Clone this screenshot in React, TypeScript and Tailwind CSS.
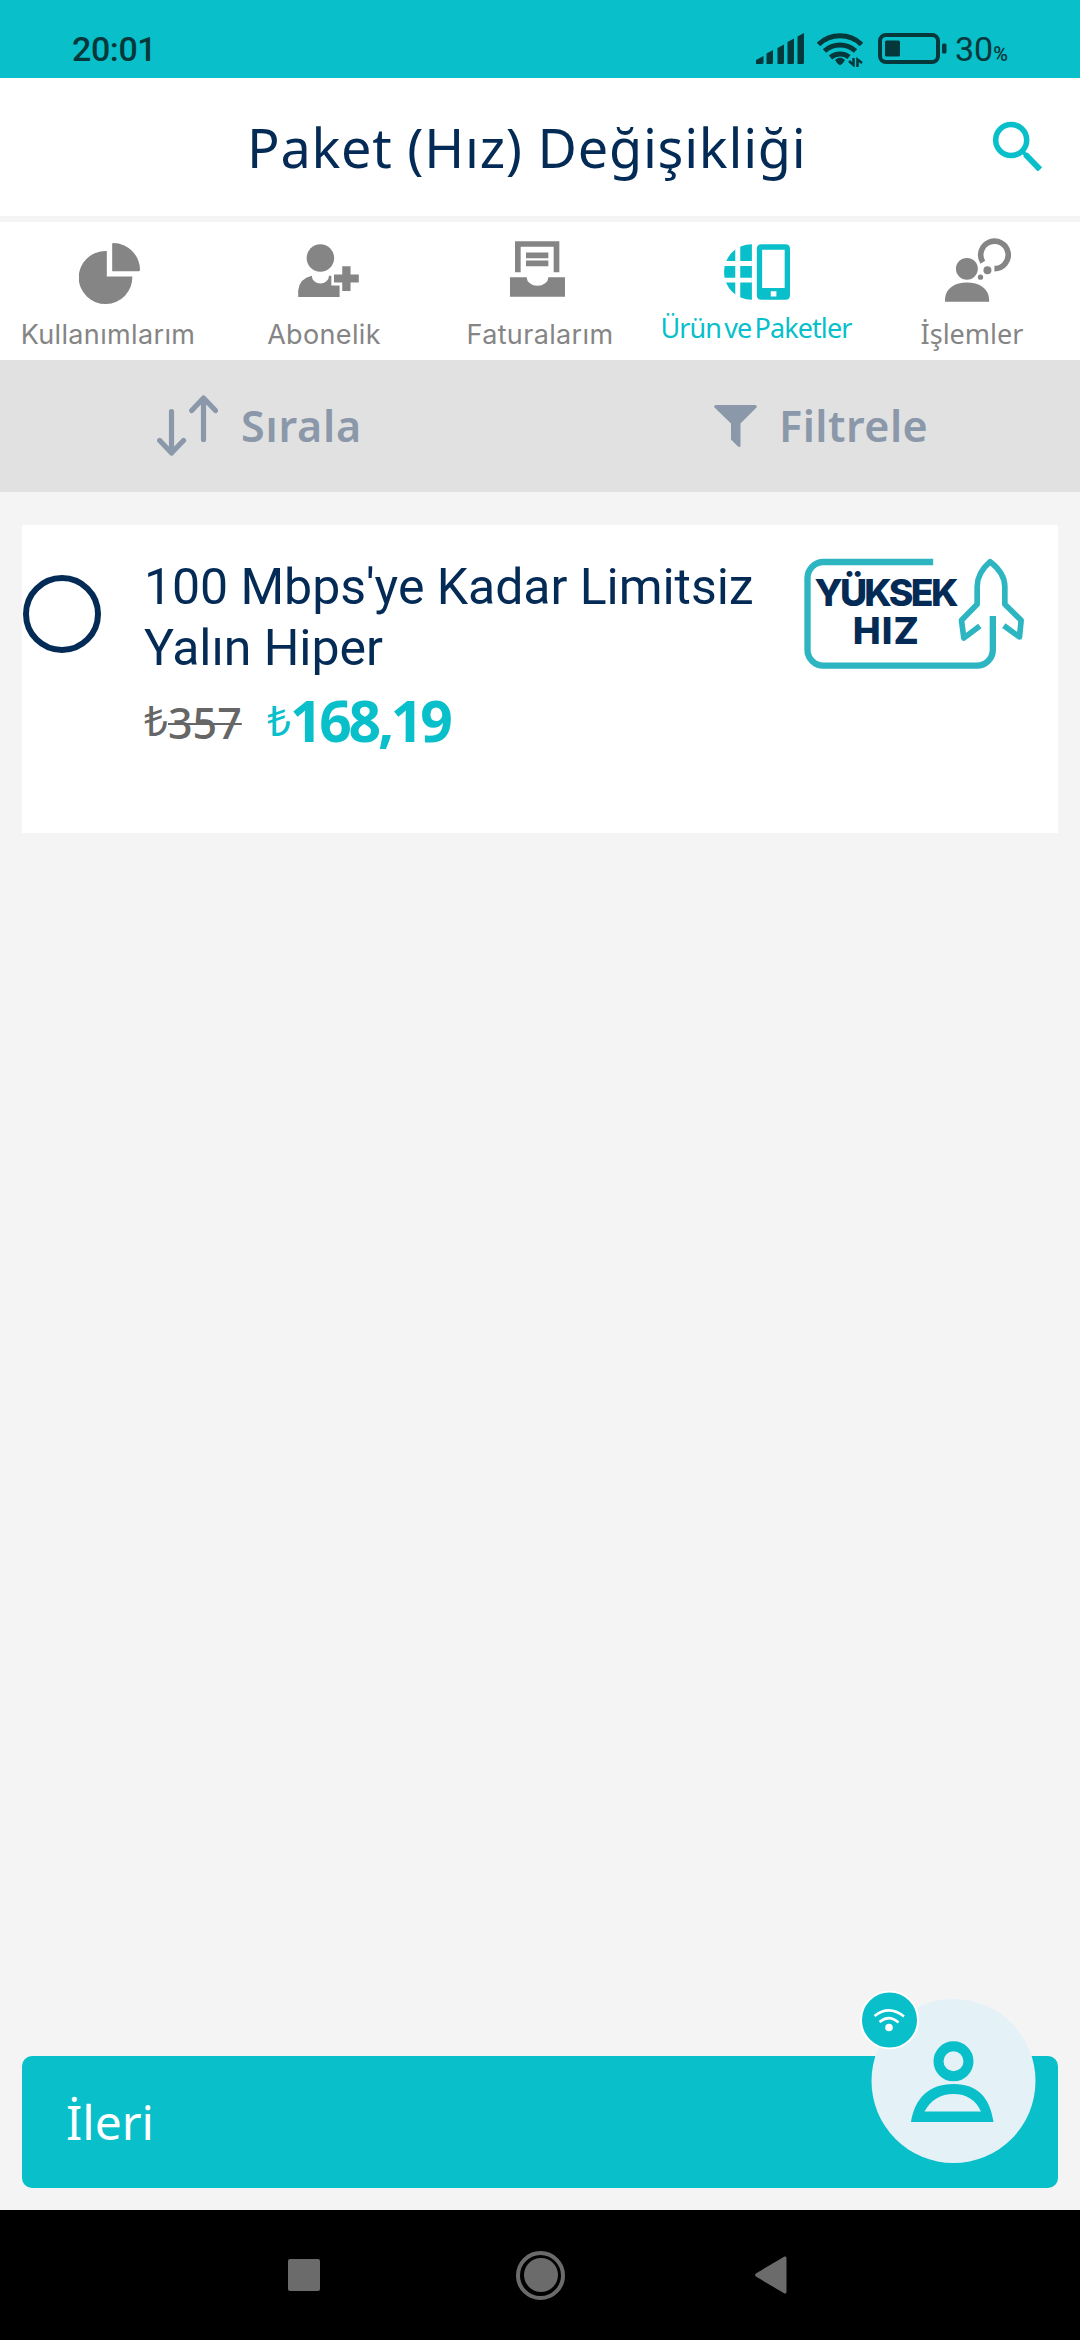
import type { ReactNode } from "react";
import clsx from "clsx";

const PieIcon = () => (
  <svg viewBox="0 0 182 182" className="ml-[79px] mt-[21px] h-[61px] w-[61px]" fill="currentColor">
    <path d="M83 24H80A80 79 0 1 0 159 100H83Z" />
    <path d="M103 0A80 81 0 0 1 182 80Q182 84 178 84H99V4Q99 0 103 0Z" />
  </svg>
);

const UserPlusIcon = () => (
  <svg viewBox="0 0 183 160" className="ml-[82px] mt-[22px] h-[53px] w-[61px]" fill="currentColor">
    <circle cx="67" cy="42" r="41.5" />
    <path d="M0 160V140Q4 104 41 96A26 23 0 0 0 93 96H100V125H125V160Z" />
    <path d="M133 67H158V92H183V116H158V142H133V116H108V92H133Z" />
  </svg>
);

const InboxIcon = () => (
  <svg viewBox="0 0 165 167" className="ml-[78px] mt-[19px] h-[56px] w-[55px]" fill="currentColor">
    <path d="M15 93V0H148V93H131V17H32V93Z" />
    <path d="M48 34H115V51H48ZM48 58H115V75H48Z" />
    <path d="M0 108H50A32.500 26 0 0 0 115 108H165V167H0Z" />
  </svg>
);

const GlobePhoneIcon = () => (
  <svg viewBox="0 0 199 168" className="ml-[76px] mt-[22px] h-[56px] w-[66px]" fill="currentColor">
    <path d="M84 0A84 84 0 0 0 84 168Z" />
    <path fill="#fff" d="M34 0H49V168H34ZM0 51H84V66H0ZM0 101H84V116H0Z" />
    <path
      fillRule="evenodd"
      d="M113 0H185Q199 0 199 14V154Q199 168 185 168H113Q99 168 99 154V14Q99 0 113 0ZM115 17V132H183V17ZM141 142V158H158V142Z"
    />
  </svg>
);

const ThinkingIcon = () => (
  <svg viewBox="0 0 199 191" className="ml-[81px] mt-4 h-[64px] w-[66px]" fill="currentColor">
    <circle cx="66" cy="92" r="33" />
    <path d="M0 191V182C2 150 30 133 66 133S131 150 133 182V191Z" />
    <path d="M149 91.500A41.500 41.500 0 1 0 114 72" fill="none" stroke="currentColor" strokeWidth="17" />
    <circle cx="128" cy="96" r="12" />
    <circle cx="107" cy="117" r="8" />
  </svg>
);

type Tab = { label: string; icon: ReactNode; labelClass: string; active?: boolean };

const tabs: Tab[] = [
  {
    label: "Kullanımlarım",
    icon: <PieIcon />,
    labelClass: "mt-[7px] font-['Inter'] text-[27px] tracking-[0.35px]",
  },
  {
    label: "Abonelik",
    icon: <UserPlusIcon />,
    labelClass: "mt-[7px] font-['Inter'] text-[27px] tracking-[0.35px]",
  },
  {
    label: "Faturalarım",
    icon: <InboxIcon />,
    labelClass: "mt-[7px] font-['Inter'] text-[27px] tracking-[0.35px]",
  },
  {
    label: "Ürün ve Paketler",
    icon: <GlobePhoneIcon />,
    labelClass: "font-['Noto_Sans'] text-[27px] tracking-[-0.9px] [word-spacing:-3px]",
    active: true,
  },
  {
    label: "İşlemler",
    icon: <ThinkingIcon />,
    labelClass: "mt-[6px] font-['Noto_Sans'] text-[27px]",
  },
];

function StatusBar() {
  return (
    <div className="flex h-[78px] items-start bg-[#08bfca] pl-[72px] font-['Roboto'] text-[#04383b]">
      <span className="mt-[29px] w-[684px] text-[34px] font-medium leading-[40px] tracking-[-0.4px]">20:01</span>
      <svg viewBox="0 0 48 31" className="mt-[33px] h-[31px] w-[48px]" fill="currentColor">
        <path d="M0 31V27L7.500 23V29.500Q7.500 31 6 31ZM10.500 31V20.500L17 17V29.500Q17 31 15.500 31H12ZM21.500 31V15L28 11.500V29.500Q28 31 26.500 31ZM31.500 31V9L38 5.500V29.500Q38 31 36.500 31ZM41.500 31V3.500L48 0V29.500Q48 31 46.500 31Z" />
      </svg>
      <svg viewBox="0 0 46 35" className="ml-[13px] mt-8 h-[35px] w-[46px]" fill="none" stroke="currentColor" strokeWidth="5">
        <path d="M1.500 12.500A31 31 0 0 1 44.500 12.500M7.500 19A23 23 0 0 1 38.500 19M13.500 25.500A15 15 0 0 1 32 25" />
        <path d="M18 28Q23 23 28 28Q25 33 23 33T18 28Z" fill="currentColor" stroke="none" />
        <path d="M36.500 26V33L32 29M40.500 35V27.500L45 31" strokeWidth="2.500" />
      </svg>
      <svg viewBox="0 0 69 31" className="ml-[15px] mt-[33px] h-[31px] w-[69px]" fill="currentColor">
        <rect x="2" y="2" width="58" height="27" rx="6" fill="none" stroke="currentColor" strokeWidth="4" />
        <rect x="7" y="7.500" width="15" height="16" rx="1.500" />
        <rect x="64" y="10.500" width="4.500" height="10" rx="1.500" />
      </svg>
      <span className="ml-[8px] mt-[29px] text-[34px] leading-[40px]">30</span>
      <span className="mt-[39px] text-[20px] font-medium leading-[30px]">%</span>
    </div>
  );
}

function Header() {
  return (
    <header className="flex h-[138px] bg-white pl-[245px]">
      <h1 className="mt-[26px] w-[747px] whitespace-nowrap pl-[2px] font-['Noto_Sans'] text-[54px] leading-[86px] tracking-[0.75px] text-[#032b56]">
        Paket (Hız) Değişikliği
      </h1>
      <svg viewBox="0 0 50 50" className="mt-[43px] h-[50px] w-[50px] text-[#08bfca]" fill="none" stroke="currentColor">
        <circle cx="19.200" cy="19" r="15.500" strokeWidth="5.500" />
        <path d="M33.500 33.500L48 48.500" strokeWidth="6" />
        <path d="M30 30L36 36" strokeWidth="4" />
      </svg>
    </header>
  );
}

function TabBar() {
  return (
    <nav className="mt-1.5 grid h-[138px] grid-cols-5 bg-white">
      {tabs.map((tab) => (
        <div key={tab.label} className={clsx("flex flex-col", tab.active ? "text-[#08bfca]" : "text-[#858585]")}>
          <div className="h-[86px]">{tab.icon}</div>
          <span className={clsx("whitespace-nowrap text-center leading-[40px]", tab.labelClass)}>{tab.label}</span>
        </div>
      ))}
    </nav>
  );
}

function SortBar() {
  return (
    <div className="flex h-[132px] bg-[#e1e1e1] pl-[157px] font-['Noto_Sans'] text-[43px] font-semibold leading-[80px] text-[#8a98aa]">
      <div className="flex w-[557px]">
        <svg
          viewBox="0 0 61 61"
          className="mt-[35px] h-[61px] w-[61px]"
          fill="none"
          stroke="currentColor"
          strokeWidth="5.200"
          strokeLinecap="round"
          strokeLinejoin="round">
          <path d="M14.500 16.500V57.500M2.700 45.500L14.500 58L26.500 45.500M46.500 44.500V3.500M34.700 15.500L46.500 3L58.500 15.500" />
        </svg>
        <span className="ml-[23px] mt-[26px] tracking-[0.8px]">Sırala</span>
      </div>
      <svg viewBox="0 0 43 42" className="mt-[45px] h-[42px] w-[43px]" fill="currentColor">
        <path d="M1.500 0H41.500Q43.500 1 42.500 2.500L26.500 18.500V41Q26 42.500 24 41.500L17 34.500V18.500L.5 2.500Q-.5 1 1.500 0Z" />
      </svg>
      <span className="ml-[22px] mt-[26px] tracking-[0.5px]">Filtrele</span>
    </div>
  );
}

function SpeedBadge() {
  return (
    <svg viewBox="72 54 668 336" className="ml-[47px] mt-[33px] h-[112px] w-[223px] shrink-0" fill="none" stroke="#2db5c2">
      <path
        d="M462 66H133A48 48 0 0 0 85 114V329A48 48 0 0 0 133 377H593A48 48 0 0 0 641 329V228"
        strokeWidth="19"
      />
      <path
        d="M602 258L554 294L547 241L594 193V140Q594 99 633 65Q677 99 677 140V193L726 241L721 291L674 257"
        strokeWidth="17"
        strokeLinejoin="round"
      />
      <g fill="#032b56" stroke="none" fontFamily="Inter, sans-serif" fontWeight="800" fontSize="112">
        <text x="106" y="197" textLength="432">
          YÜKSEK
        </text>
        <text x="221" y="313" textLength="198">
          HIZ
        </text>
      </g>
    </svg>
  );
}

function PackageCard() {
  return (
    <div className="mx-[22px] mt-[33px] flex h-[308px] bg-white">
      <div className="ml-[1px] mt-[50px] h-[78px] w-[78px] shrink-0 rounded-full border-[6px] border-[#032b56]" />
      <div className="ml-[43px] w-[612px] shrink-0">
        <p className="mt-[32px] whitespace-nowrap font-['Roboto'] text-[50px] leading-[61px] tracking-[-0.05px] text-[#032b56]">
          100 Mbps'ye Kadar Limitsiz
          <br />
          Yalın Hiper
        </p>
        <div className="mt-[3px] flex items-baseline font-['Noto_Sans'] leading-[70px]">
          <span className="relative -top-[3px] w-[24px] text-[42px] text-[#666]">₺</span>
          <span className="w-[99px] text-[43px] font-medium text-[#666]">
            <span className="line-through decoration-2">357</span>
          </span>
          <span className="relative -top-[3px] w-[23px] text-[42px] text-[#08bfca]">₺</span>
          <span className="relative top-[3px] text-[57px] font-bold tracking-[-3.3px] text-[#08bfca]">168,19</span>
        </div>
      </div>
      <SpeedBadge />
    </div>
  );
}

function AssistantButton() {
  return (
    <div className="absolute left-[860px] top-[1990px]">
      <svg width="180" height="176" viewBox="0 0 180 176" fill="none">
        <circle cx="93.500" cy="91" r="82" fill="#e4f2f8" />
        <circle cx="93.500" cy="71.300" r="15" stroke="#08bfca" strokeWidth="10" />
        <path
          fill="#08bfca"
          fillRule="evenodd"
          d="M51 132C55 108 69 94 93.500 94S130 108 133.500 132ZM64.500 121.500H121Q113 104 93.500 104T64.500 121.500Z"
        />
        <circle cx="29.500" cy="30" r="28.500" fill="#08bfca" stroke="#fff" strokeWidth="2" />
        <circle cx="29" cy="37.500" r="3.800" fill="#fff" />
        <path d="M14.500 26Q29 14.500 44 26.500M19.500 32Q29 24 38.500 32.500" stroke="#fff" strokeWidth="2.500" />
      </svg>
    </div>
  );
}

function SystemNav() {
  return (
    <div className="flex h-[130px] items-center bg-black text-[#6b6b6b]">
      <div className="ml-[288px] h-[32px] w-[32px] rounded-[2px] bg-[#6b6b6b]" />
      <div className="ml-[196px] flex h-[49px] w-[49px] items-center justify-center rounded-full border-4 border-[#6b6b6b]">
        <div className="h-[34px] w-[34px] shrink-0 rounded-full bg-[#6b6b6b]" />
      </div>
      <svg viewBox="0 0 32 38" className="ml-[190px] h-[38px] w-[32px]" fill="currentColor">
        <path d="M.8 17.500L29.500 .5Q31.500 0 31.500 2V36Q31.500 38 29.500 37.500L.8 20.500Q-.5 19 .8 17.500Z" />
      </svg>
    </div>
  );
}

export default function App() {
  return (
    <div className="relative flex h-[2340px] w-[1080px] flex-col overflow-hidden bg-[#f4f4f4]">
      <StatusBar />
      <Header />
      <TabBar />
      <SortBar />
      <PackageCard />
      <button className="mx-[22px] mb-[22px] mt-auto h-[132px] rounded-[10px] bg-[#08bfca] pl-[44px] text-left font-['Noto_Sans'] text-[48px] leading-[60px] text-white">
        İleri
      </button>
      <SystemNav />
      <AssistantButton />
    </div>
  );
}
